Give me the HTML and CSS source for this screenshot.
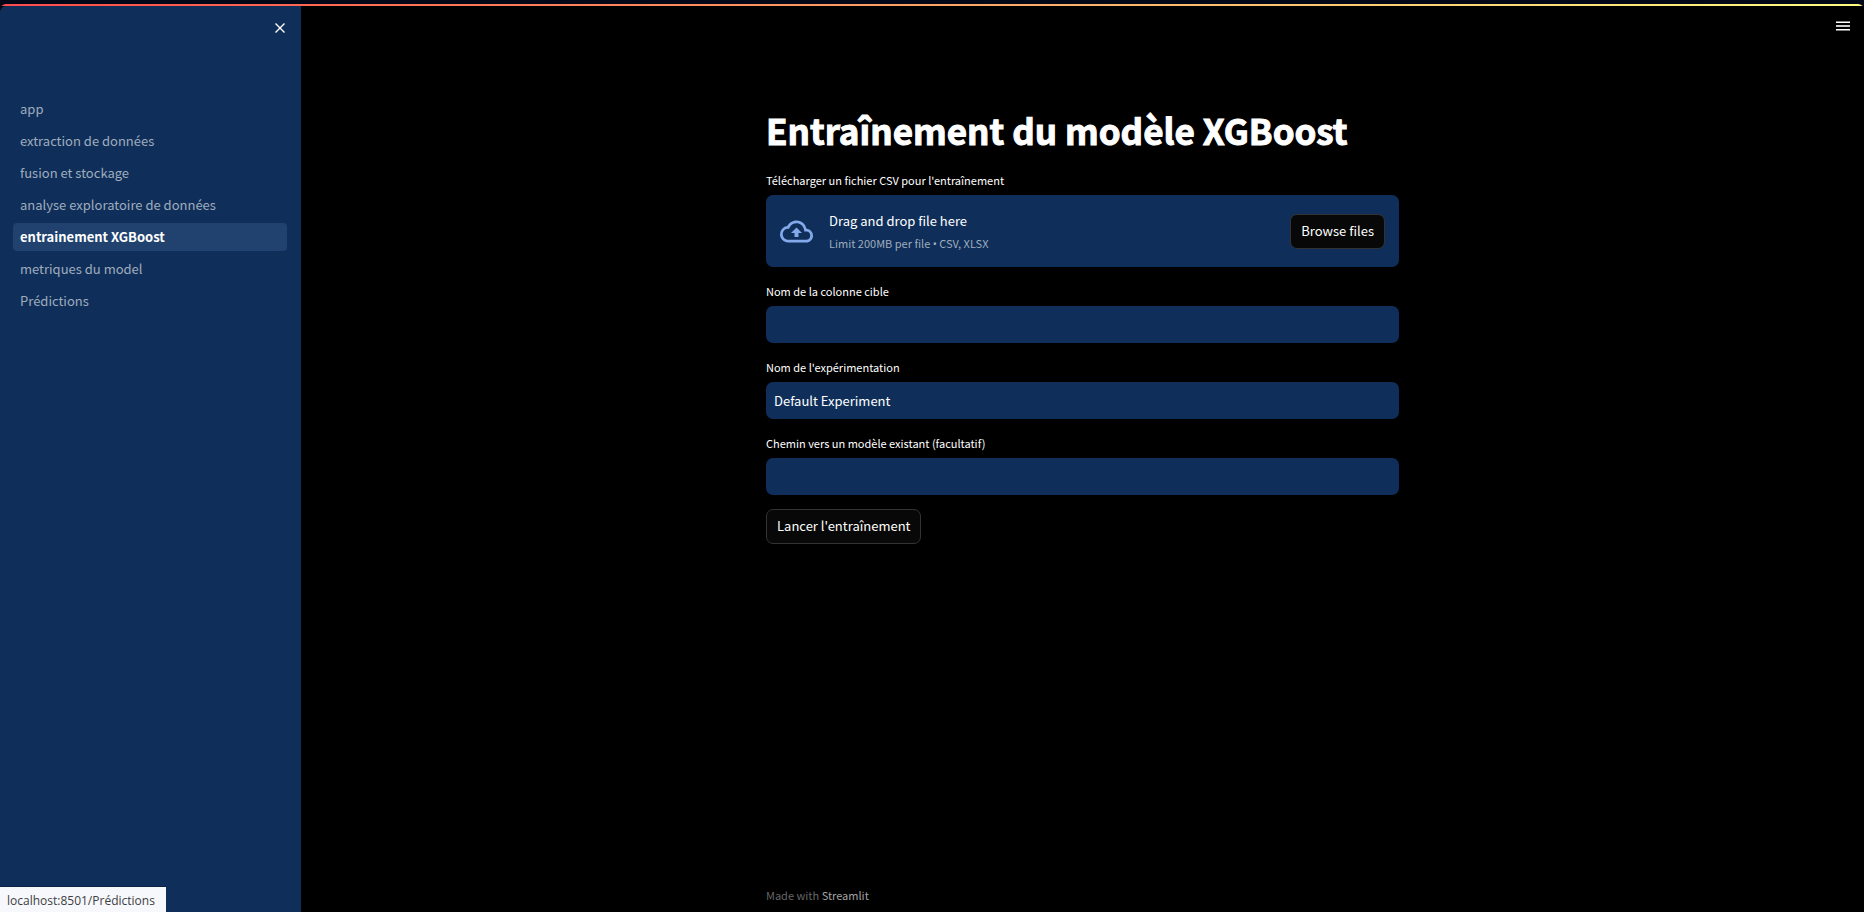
FILE: index.html
```html
<!DOCTYPE html>
<html lang="fr">
<head>
<meta charset="utf-8">
<title>entrainement XGBoost</title>
<meta name="viewport" content="width=device-width, initial-scale=1">
<link rel="stylesheet" href="styles.css">
</head>
<body>
<div class="shell">
  <aside class="sidebar">
    <div class="sidebar-top">
      <button class="icon-button" type="button" aria-label="Fermer le menu">
        <svg width="10" height="10" viewBox="0 0 10 10" fill="none" stroke="currentColor" stroke-width="1.4" aria-hidden="true"><path d="M.5.5l9 9M9.5.5l-9 9"/></svg>
      </button>
    </div>
    <nav class="nav" aria-label="Pages">
      <a class="nav-link" href="#app">app</a>
      <a class="nav-link" href="#extraction">extraction de données</a>
      <a class="nav-link" href="#fusion">fusion et stockage</a>
      <a class="nav-link" href="#analyse">analyse exploratoire de données</a>
      <a class="nav-link active" href="#entrainement" aria-current="page">entrainement XGBoost</a>
      <a class="nav-link" href="#metriques">metriques du model</a>
      <a class="nav-link" href="#predictions">Prédictions</a>
    </nav>
  </aside>
  <main class="main">
    <form class="content">
      <h1 class="title">Entraînement du modèle XGBoost</h1>
      <div class="field">
        <label class="label" for="browse">Télécharger un fichier CSV pour l'entraînement</label>
        <section class="dropzone">
          <svg class="cloud" viewBox="0 0 24 24" fill="currentColor" aria-hidden="true"><path d="M19.35 10.04A7.49 7.49 0 0 0 12 4C9.11 4 6.6 5.64 5.35 8.04A5.994 5.994 0 0 0 0 14c0 3.31 2.69 6 6 6h13c2.76 0 5-2.24 5-5 0-2.64-2.05-4.78-4.65-4.96zM19 18H6c-2.21 0-4-1.79-4-4 0-2.05 1.53-3.76 3.56-3.97l1.07-.11.5-.95A5.469 5.469 0 0 1 12 6c2.62 0 4.88 1.86 5.39 4.43l.3 1.5 1.53.11A2.98 2.98 0 0 1 22 15c0 1.65-1.35 3-3 3zM8 13h2.55v3h2.9v-3H16l-4-4z"/></svg>
          <div class="drop-text">
            <span class="drop-title">Drag and drop file here</span>
            <span class="drop-hint">Limit 200MB per file <span class="bullet">•</span> CSV, XLSX</span>
          </div>
          <button class="button" id="browse" type="button">Browse files</button>
        </section>
      </div>
      <div class="field">
        <label class="label" for="target">Nom de la colonne cible</label>
        <input class="input" id="target" type="text">
      </div>
      <div class="field">
        <label class="label" for="experiment">Nom de l'expérimentation</label>
        <input class="input" id="experiment" type="text" value="Default Experiment">
      </div>
      <div class="field">
        <label class="label" for="model">Chemin vers un modèle existant (facultatif)</label>
        <input class="input" id="model" type="text">
      </div>
      <button class="button submit" type="button">Lancer l'entraînement</button>
    </form>
    <footer class="footer">Made with <a href="#streamlit">Streamlit</a></footer>
    <button class="icon-button menu" type="button" aria-label="Menu principal">
      <svg width="14" height="10" viewBox="0 0 14 10" aria-hidden="true"><path fill="#fff" d="M0 .5h14V2H0zM0 8h14v1.5H0z"/><path fill="#ccc" d="M0 4h14v2H0z"/></svg>
    </button>
  </main>
</div>
<div class="link-status">localhost:8501/Prédictions</div>
</body>
</html>
```
FILE: styles.css
```css
* { box-sizing: border-box; }

body {
  margin: 0;
  min-height: 100vh;
  display: flex;
  flex-direction: column;
  padding-top: 4px;
  background: #020817;
  color: #fff;
  font-family: "Noto Sans CJK SC", "Noto Sans", sans-serif;
  font-size: 13px;
  line-height: 22px;
}

button, input { font: inherit; color: inherit; }

.shell {
  flex: 1;
  display: flex;
  padding-top: 2px;
  border-radius: 6px 6px 0 0;
  overflow: hidden;
  background: #000 linear-gradient(90deg, #ff4b4b, #fffd80) top / 100% 2px no-repeat;
}

.sidebar {
  flex: 0 0 301px;
  background: #0f2f5a;
  border-top-left-radius: 6px;
}

.sidebar-top {
  display: flex;
  justify-content: flex-end;
  padding: 12px 11px 0 0;
}

.icon-button {
  display: grid;
  place-items: center;
  width: 20px;
  height: 20px;
  padding: 0;
  border: 0;
  background: none;
}

.nav {
  display: flex;
  flex-direction: column;
  gap: 4px;
  padding: 57px 14px 0 13px;
}

.nav-link {
  padding: 3px 7px;
  border-radius: 4px;
  color: #9facbd;
  text-decoration: none;
}

.nav-link.active {
  background: #21426f;
  color: #fff;
  font-weight: 700;
}

.main {
  position: relative;
  flex: 1;
  min-width: 0;
  display: flex;
  flex-direction: column;
  align-items: center;
  justify-content: space-between;
  padding: 100px 16px 6px;
}

.content, .footer { width: 100%; max-width: 633px; }

.content {
  display: flex;
  flex-direction: column;
  gap: 14px;
}

.title {
  margin: 0;
  padding-bottom: 2px;
  font-size: 35px;
  line-height: 48px;
  font-weight: 700;
  -webkit-text-stroke: 1px #fff;
}

.field {
  display: flex;
  flex-direction: column;
  gap: 5px;
}

.label {
  font-size: 11px;
  line-height: 20px;
}

.drop-hint, .footer { font-size: 11px; }

.dropzone {
  display: flex;
  align-items: center;
  gap: 16px;
  min-height: 72px;
  padding: 12px 14px;
  border-radius: 7px;
  background: #0f2f5a;
}

.cloud {
  width: 33px;
  height: 33px;
  color: #83a9ea;
}

.drop-text {
  flex: 1;
  display: flex;
  flex-direction: column;
  padding-top: 3px;
}

.drop-hint { color: #9facbd; }

.bullet { font-family: "Noto Sans", sans-serif; }

.button {
  height: 35px;
  padding: 0 10px 1px;
  border: 1px solid #333;
  border-radius: 7px;
  background: #080808;
}

.submit { align-self: flex-start; }

.input {
  width: 100%;
  height: 37px;
  padding: 0 8px 1px;
  border: 0;
  border-radius: 7px;
  background: #0f2f5a;
}

.footer { color: #666; }

.footer a {
  color: #a3a3a3;
  text-decoration: none;
}

.menu {
  position: absolute;
  top: 10px;
  right: 11px;
}

.link-status {
  position: fixed;
  left: 0;
  bottom: 0;
  padding: 3px 11px 0 7px;
  border-top: 1px solid #0a2142;
  background: #f7f8fb;
  color: #3c4043;
  font-family: "Open Sans", sans-serif;
  font-size: 12px;
}
```
